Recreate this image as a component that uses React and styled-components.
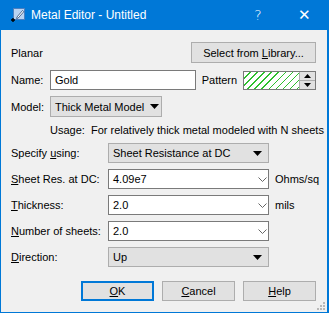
import React from 'react';
import styled, { createGlobalStyle } from 'styled-components';

const GlobalStyle = createGlobalStyle`
  html, body {
    margin: 0;
    padding: 0;
    background: #f0f0f0;
  }
  body {
    font-family: "Liberation Sans", Arial, sans-serif;
    font-size: 11px;
    color: #000;
  }
`;

const Window = styled.div`
  width: 329px;
  height: 313px;
  box-sizing: border-box;
  border: 1px solid #0078d7;
  border-right-width: 2px;
  border-top: none;
  background: #f0f0f0;
  display: flex;
  flex-direction: column;
  position: relative;
`;

const TitleBar = styled.div`
  height: 30px;
  background: #0078d7;
  display: flex;
  align-items: center;
  padding-left: 9px;
  color: #fff;
  flex-shrink: 0;
`;

const Title = styled.span`
  margin-left: 5px;
  font-size: 12px;
  flex: 1;
`;

const TitleBtn = styled.span`
  width: ${p => p.w}px;
  text-align: center;
  font-size: ${p => p.size || 14}px;
  font-family: "DejaVu Sans", sans-serif;
  font-weight: 300;
`;

const Body = styled.div`
  flex: 1;
  padding: 12px 11px 0 10px;
  display: flex;
  flex-direction: column;
`;

const Row = styled.div`
  display: flex;
  align-items: center;
  height: ${p => p.h || 20}px;
  margin-top: ${p => p.mt || 0}px;
  padding-left: ${p => p.pl || 0}px;
`;

const Label = styled.span`
  width: ${p => p.w ? p.w + 'px' : 'auto'};
  flex-shrink: 0;
  white-space: nowrap;
`;

const Spacer = styled.div`
  flex: 1;
`;

const Button = styled.button`
  font: inherit;
  color: #000;
  box-sizing: border-box;
  width: ${p => p.w}px;
  height: ${p => p.h || 20}px;
  background: #e1e1e1;
  border: ${p => p.primary ? '2px solid #0078d7' : '1px solid #adadad'};
  padding: 0;
  margin-left: ${p => p.ml || 0}px;
  white-space: nowrap;
  text-align: center;
`;

const TextInput = styled.div`
  box-sizing: border-box;
  width: ${p => p.w}px;
  height: 20px;
  background: #fff;
  border: 1px solid #7a7a7a;
  display: flex;
  align-items: center;
  padding-left: 4px;
  white-space: nowrap;
`;

const Select = styled.div`
  box-sizing: border-box;
  width: ${p => p.w}px;
  height: ${p => p.h || 20}px;
  background: #e1e1e1;
  border: 1px solid #adadad;
  display: flex;
  align-items: center;
  gap: 6px;
  padding: 0 ${p => p.pr || 6}px 0 4px;
  white-space: nowrap;
`;

const Chevron = styled.svg`
  margin-left: auto;
  margin-right: 1px;
`;

const PatternBox = styled.div`
  box-sizing: border-box;
  width: 73px;
  height: 19px;
  margin-left: 6px;
  border: 1px solid #7a7a7a;
  display: flex;
  background: #fff;
`;

const Hatch = styled.div`
  flex: 1;
  background: repeating-linear-gradient(
    135deg,
    #fff 0px,
    #fff 4px,
    #2ec02e 4px,
    #2ec02e 5px
  );
`;

const Spin = styled.div`
  width: 15px;
  display: flex;
  flex-direction: column;
  background: #e1e1e1;
  border-left: 1px solid #adadad;
`;

const SpinBtn = styled.div`
  flex: 1;
  display: flex;
  align-items: center;
  justify-content: center;
  border-top: ${p => p.bottom ? '1px solid #adadad' : 'none'};
`;

const Form = styled.div`
  display: grid;
  grid-template-columns: 97px 161px auto;
  grid-auto-rows: 20px;
  row-gap: 6px;
  align-items: center;
  margin-top: 4px;
`;

const Unit = styled.span`
  margin-left: 6px;
`;

const Buttons = styled.div`
  display: flex;
  margin-top: 14px;
  padding-left: 70px;
`;

const Grip = styled.svg`
  position: absolute;
  right: 1px;
  bottom: 1px;
`;

const U = styled.span`
  text-decoration: underline;
`;

const Arrow = () => (
  <svg width="9" height="5" style={{ marginLeft: 'auto', flexShrink: 0 }}>
    <path d="M0 0 H9 L4.5 5 Z" fill="#000" />
  </svg>
);

const EditCombo = ({ w, value }) => (
  <TextInput w={w}>
    <span>{value}</span>
    <Chevron width="9" height="5">
      <path d="M0.5 0.5 L4.5 4.5 L8.5 0.5" stroke="#666" fill="none" strokeWidth="1" />
    </Chevron>
  </TextInput>
);

const AppIcon = () => (
  <svg width="16" height="16" viewBox="0 0 16 16">
    <rect x="3.5" y="1.5" width="11" height="11" fill="#b9d3f2" stroke="#4a7fc0" />
    <path d="M7 10 L12.5 3.5 L13.8 4.7 L8.2 11 L6.6 11.6 Z" fill="#fff" stroke="#2b4b7a" strokeWidth="0.8" />
    <path d="M1 13 H5 M3 11 V15" stroke="#000" strokeWidth="1.4" />
  </svg>
);

export default function App() {
  return (
    <>
      <GlobalStyle />
      <Window>
        <TitleBar>
          <AppIcon />
          <Title>Metal Editor - Untitled</Title>
          <TitleBtn w={46} size={14}>?</TitleBtn>
          <TitleBtn w={46} size={15}>✕</TitleBtn>
        </TitleBar>
        <Body>
          <Row h={21}>
            <Label>Planar</Label>
            <Spacer />
            <Button w={125} h={21}><span>Select from <U>L</U>ibrary...</span></Button>
          </Row>
          <Row mt={7}>
            <Label w={39}>Name:</Label>
            <TextInput w={146}>Gold</TextInput>
            <Label style={{ marginLeft: 6 }}>Pattern</Label>
            <PatternBox>
              <Hatch />
              <Spin>
                <SpinBtn>
                  <svg width="7" height="4"><path d="M0 4 H7 L3.5 0 Z" fill="#000" /></svg>
                </SpinBtn>
                <SpinBtn bottom>
                  <svg width="7" height="4"><path d="M0 0 H7 L3.5 4 Z" fill="#000" /></svg>
                </SpinBtn>
              </Spin>
            </PatternBox>
          </Row>
          <Row mt={6} h={21}>
            <Label w={39}>Model:</Label>
            <Select w={112} h={21} pr={5}><span>Thick Metal Model</span><Arrow /></Select>
          </Row>
          <Row mt={4} h={18} pl={39}>
            <Label>Usage:&nbsp;&nbsp;For relatively thick metal modeled with N sheets</Label>
          </Row>
          <Form>
            <Label>Specify <U>u</U>sing:</Label>
            <Select w={161}><span>Sheet Resistance at DC</span><Arrow /></Select>
            <span />

            <Label><U>S</U>heet Res. at DC:</Label>
            <EditCombo w={161} value="4.09e7" />
            <Unit>Ohms/sq</Unit>

            <Label><U>T</U>hickness:</Label>
            <EditCombo w={161} value="2.0" />
            <Unit>mils</Unit>

            <Label><U>N</U>umber of sheets:</Label>
            <EditCombo w={161} value="2.0" />
            <span />

            <Label><U>D</U>irection:</Label>
            <Select w={161}><span>Up</span><Arrow /></Select>
            <span />
          </Form>
          <Buttons>
            <Button w={73} primary><U>O</U>K</Button>
            <Button w={73} ml={8}><U>C</U>ancel</Button>
            <Button w={73} ml={8}><U>H</U>elp</Button>
          </Buttons>
        </Body>
        <Grip width="10" height="10">
          <rect x="7" y="1" width="2" height="2" fill="#b8b8b8" />
          <rect x="4" y="4" width="2" height="2" fill="#b8b8b8" />
          <rect x="7" y="4" width="2" height="2" fill="#b8b8b8" />
          <rect x="1" y="7" width="2" height="2" fill="#b8b8b8" />
          <rect x="4" y="7" width="2" height="2" fill="#b8b8b8" />
          <rect x="7" y="7" width="2" height="2" fill="#b8b8b8" />
        </Grip>
      </Window>
    </>
  );
}
